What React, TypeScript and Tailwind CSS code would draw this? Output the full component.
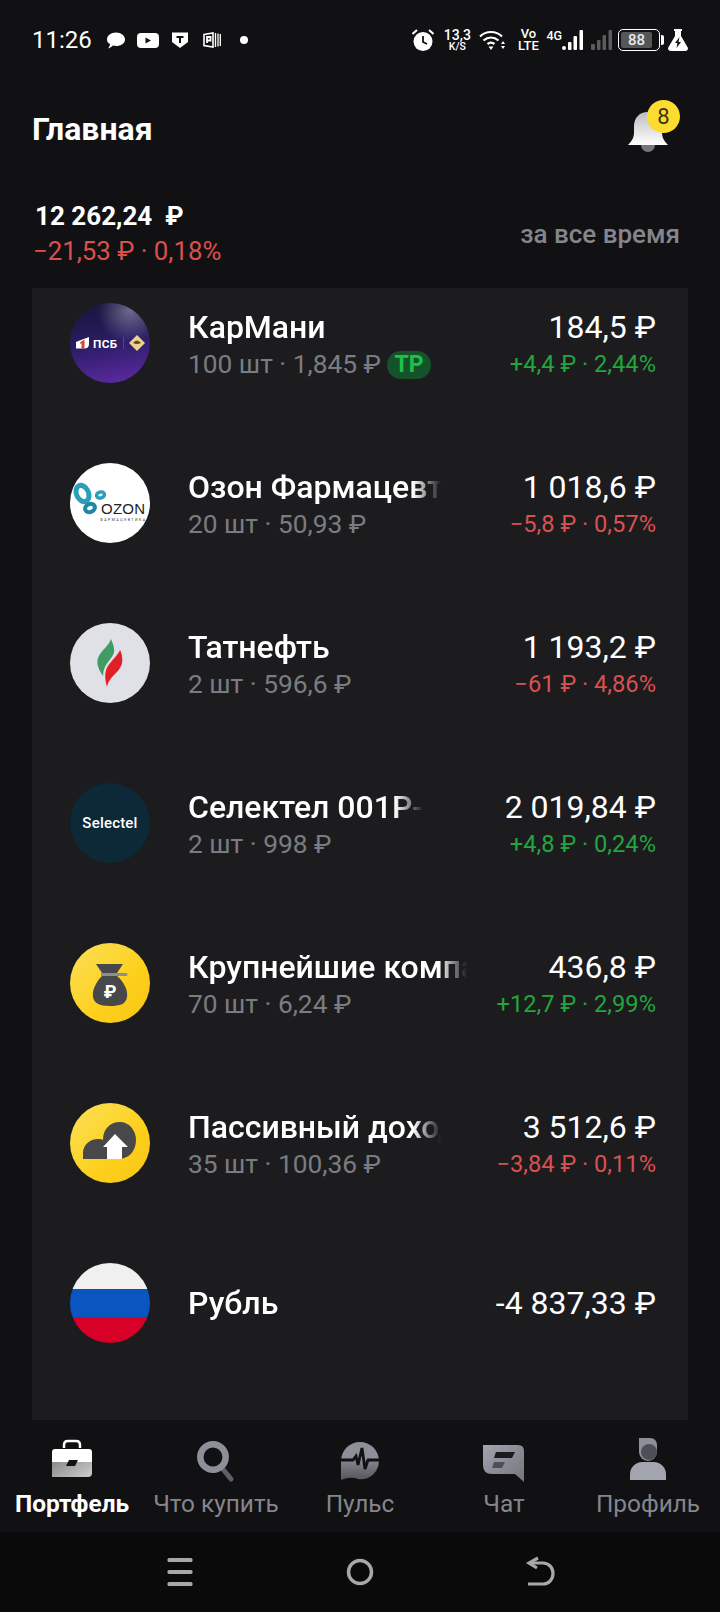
import React from 'react'

const GREEN = 'text-[#22a53c]'
const RED = 'text-[#d9504f]'

function Psb() {
    return (
        <div className="w-20 h-20 rounded-full overflow-hidden shrink-0 bg-[linear-gradient(170deg,#1a1844_15%,#2d1c68_50%,#5a2aa0_95%)]">
            <svg viewBox="0 0 80 80" className="w-20 h-20">
                <defs>
                    <radialGradient id="psbGlow" cx="0.75" cy="0.1" r="0.4">
                        <stop offset="0" stopColor="#8f8aa8" stopOpacity="0.7" />
                        <stop offset="1" stopColor="#8f8aa8" stopOpacity="0" />
                    </radialGradient>
                </defs>
                <rect width="80" height="80" fill="url(#psbGlow)" />
                <path d="M7 38.500 L19 34 V41 Q19 45 15 45.500 H6 V39 Z" fill="#fff" />
                <path d="M10 39.500 L14.500 36.500 V45.500 H11.500 V40 L10 41 Z" fill="#d9432f" />
                <text x="23" y="44.700" fontSize="11.700" fontWeight="700" fill="#fff" fontFamily="Roboto, sans-serif" textLength="24">ПСБ</text>
                <rect x="53" y="34" width="0.600" height="12" fill="#6d5c9a" />
                <path d="M67 32 L75 40 L67 48 L59 40 Z" fill="#ecd18f" />
                <path d="M63 40 Q67 35 71 40 Q67 42 63 40 Z" fill="#5a4a1c" />
            </svg>
        </div>
    )
}

function Ozon() {
    return (
        <div className="w-20 h-20 rounded-full overflow-hidden shrink-0 bg-white">
            <svg viewBox="0 0 80 80" className="w-20 h-20">
                <ellipse cx="12.500" cy="30.500" rx="6" ry="8.500" transform="rotate(-25 12.500 30.500)" fill="none" stroke="#2a9fb9" strokeWidth="5" />
                <ellipse cx="30.500" cy="32" rx="4" ry="3" transform="rotate(-15 30.500 32)" fill="none" stroke="#2a9fb9" strokeWidth="3.500" />
                <ellipse cx="20" cy="45" rx="5" ry="4" transform="rotate(-25 20 45)" fill="none" stroke="#1f86a6" strokeWidth="4" />
                <text x="31" y="51" fontSize="15" fill="#222" fontFamily="Liberation Sans, sans-serif" textLength="44">OZON</text>
                <text x="30" y="58" fontSize="3.600" fill="#444" fontFamily="Roboto, sans-serif" textLength="45">ФАРМАЦЕВТИКА</text>
            </svg>
        </div>
    )
}

function Tatneft() {
    return (
        <div className="w-20 h-20 rounded-full overflow-hidden shrink-0 bg-[#dfe1e6]">
            <svg viewBox="0 0 80 80" className="w-20 h-20">
                <path d="M41 16 C39 23 31 27 28 35 C26 41 29 47 33 53 C33 47 35 43 38 39 C42 34 45 30 44 26 C44 22 42 19 41 16 Z" fill="#3f9c63" />
                <path d="M50 27 C48 32 42 37 38 43 C34 49 35 57 37 64 C38 58 42 54 47 49 C52 44 53 38 52 34 C52 31 51 29 50 27 Z" fill="#e01f26" />
            </svg>
        </div>
    )
}

function Selectel() {
    return (
        <div className="w-20 h-20 rounded-full shrink-0 bg-[#0d2836] flex items-center justify-center">
            <span className="text-white text-[15px] font-medium tracking-[0.2px]">Selectel</span>
        </div>
    )
}

function Bag() {
    return (
        <div className="w-20 h-20 rounded-full overflow-hidden shrink-0 bg-[linear-gradient(135deg,#fbe05a,#fdd01c_60%,#f7c514)]">
            <svg viewBox="0 0 80 80" className="w-20 h-20">
                <path d="M26 21 H53 L47 30 H32 Z" fill="#48484a" />
                <path d="M31 30 H57 Q58 32 57 33 H31 Z" fill="#8e8e8e" />
                <path d="M32 33 H47 C54 39 58 47 57 54 C56 61 50 63 40 63 C29 63 24 60 23 54 C22 47 26 39 32 33 Z" fill="#48484a" />
                <text x="40" y="55" fontSize="18" fontWeight="700" fill="#fff" textAnchor="middle" fontFamily="Roboto, sans-serif">₽</text>
            </svg>
        </div>
    )
}

function Cloud() {
    return (
        <div className="w-20 h-20 rounded-full overflow-hidden shrink-0 bg-[linear-gradient(135deg,#fbe05a,#fdd01c_60%,#f7c514)]">
            <svg viewBox="0 0 80 80" className="w-20 h-20">
                <path d="M13 56 V50 C13 42 20 36 28 36 C30 36 32 36 33 37 C33 26 40 19 50 19 C59 19 66 27 66 37 C66 48 59 56 48 56 Z" fill="#48484a" />
                <path d="M45 31 L58 44 H52 V56 H37 V44 H33 Z" fill="#fff" />
            </svg>
        </div>
    )
}

function Flag() {
    return (
        <div className="w-20 h-20 rounded-full overflow-hidden shrink-0 flex flex-col">
            <div className="h-[26px] bg-[#f0f0f0]" />
            <div className="h-[28px] bg-[#0a55c0]" />
            <div className="h-[26px] bg-[#d80027]" />
        </div>
    )
}

const ROWS = [
    { logo: <Psb />, name: 'КарМани', sub: '100 шт · 1,845 ₽', tag: true, value: '184,5 ₽', change: '+4,4 ₽ · 2,44%', color: GREEN },
    { logo: <Ozon />, name: 'Озон Фармацевтика', sub: '20 шт · 50,93 ₽', value: '1 018,6 ₽', change: '−5,8 ₽ · 0,57%', color: RED },
    { logo: <Tatneft />, name: 'Татнефть', sub: '2 шт · 596,6 ₽', value: '1 193,2 ₽', change: '−61 ₽ · 4,86%', color: RED },
    { logo: <Selectel />, name: 'Селектел 001Р-03', sub: '2 шт · 998 ₽', value: '2 019,84 ₽', change: '+4,8 ₽ · 0,24%', color: GREEN },
    { logo: <Bag />, name: 'Крупнейшие компании', sub: '70 шт · 6,24 ₽', value: '436,8 ₽', change: '+12,7 ₽ · 2,99%', color: GREEN },
    { logo: <Cloud />, name: 'Пассивный доход', sub: '35 шт · 100,36 ₽', value: '3 512,6 ₽', change: '−3,84 ₽ · 0,11%', color: RED },
    { logo: <Flag />, name: 'Рубль', value: '-4 837,33 ₽' },
]

function StatusBar() {
    return (
        <div className="h-[80px] flex items-center justify-between pl-[32px] pr-[32px] text-white shrink-0">
            <div className="flex items-center">
                <span className="text-[24px] leading-none w-[75px]">11:26</span>
                <svg width="18" height="17" viewBox="0 0 18 17" fill="#fff">
                    <path d="M9 0.500 C14 0.500 18 3.500 18 7.500 C18 11.500 14 14 9 14 C8 14 7 14 6 13.600 C4.500 15 3 16 1 16.500 C2 15 3 13.500 3 12 C1 11 0 9.500 0 7.500 C0 3.500 4 0.500 9 0.500 Z" />
                </svg>
                <svg width="22" height="15" viewBox="0 0 22 15" className="ml-3">
                    <rect width="22" height="15" rx="4" fill="#fff" />
                    <path d="M8.500 4.500 L14 7.500 L8.500 10.500 Z" fill="#111113" />
                </svg>
                <svg width="16" height="16" viewBox="0 0 16 16" className="ml-[13px]">
                    <path d="M0 0.500 H16 V10 L8 16 L0 10 Z" fill="#fff" />
                    <path d="M4.500 4 H11.500 V6 H9 V11 H7 V6 H4.500 Z" fill="#111113" />
                </svg>
                <svg width="18" height="16" viewBox="0 0 18 16" className="ml-[15px]" fill="none" stroke="#fff">
                    <path d="M1 2.500 L10 1 V15 L1 13.500 Z" strokeWidth="1.600" />
                    <path d="M4 11 V5 H7.500 V8.500 H4" strokeWidth="1.800" />
                    <path d="M12.500 1 V15 M15 1.500 V14.500 M17.300 2 V14" strokeWidth="1.300" />
                </svg>
                <div className="w-2 h-2 rounded-full bg-white ml-[19px]" />
            </div>
            <div className="flex items-center h-[24px]">
                <svg width="22" height="22" viewBox="0 0 22 22" fill="#fff">
                    <circle cx="11" cy="12.500" r="9.500" />
                    <path d="M11 7 V13 L15 15" fill="none" stroke="#111113" strokeWidth="1.800" />
                    <path d="M0.500 5 L5 1 M21.500 5 L17 1" stroke="#fff" strokeWidth="2" />
                </svg>
                <div className="w-[30px] ml-[8px] flex flex-col items-center font-medium">
                    <span className="text-[14px] leading-[13px]">13,3</span>
                    <span className="text-[10.500px] leading-[10px]">K/S</span>
                </div>
                <svg width="27" height="21" viewBox="0 0 27 21" className="ml-[7px]" fill="none" stroke="#fff">
                    <path d="M1 6.500 C7 0.500 17 0.500 23 6.500" strokeWidth="2.200" />
                    <path d="M4.500 10.500 C9 6.500 15 6.500 19.500 10.500" strokeWidth="2.200" />
                    <path d="M8.500 14 C10.500 12.500 13.500 12.500 15.500 14" strokeWidth="2.200" />
                    <path d="M9.500 16.500 H14.500 L12 20 Z" fill="#fff" stroke="none" />
                    <path d="M24 11 L26 14 H22 Z M22 16 H26 L24 19 Z" fill="#fff" stroke="none" />
                </svg>
                <div className="w-[22px] ml-[11px] flex flex-col items-center font-medium text-[13px] leading-[12px]">
                    <span>Vo</span>
                    <span>LTE</span>
                </div>
                <span className="text-[12.500px] font-medium leading-none ml-[7px] -mt-[8px]">4G</span>
                <svg width="21" height="20" viewBox="0 0 21 20" fill="#fff">
                    <circle cx="2" cy="18" r="2" />
                    <rect x="6" y="12" width="3.500" height="8" rx="1" />
                    <rect x="11.500" y="6" width="3.500" height="14" rx="1" />
                    <rect x="17.500" y="0" width="3.500" height="20" rx="1" />
                </svg>
                <svg width="21" height="20" viewBox="0 0 21 20" fill="#5c5c5c" className="ml-[8px]">
                    <rect x="0" y="14" width="4" height="6" rx="1" />
                    <rect x="6" y="10" width="3.500" height="10" rx="1" />
                    <rect x="11.500" y="5" width="3.500" height="15" rx="1" />
                    <rect x="17.500" y="0" width="3.500" height="20" rx="1" />
                </svg>
                <div className="ml-[6px] w-[42px] h-[22px] rounded-[5px] border-[1.500px] border-white p-[2px] relative">
                    <div className="w-[31px] h-full rounded-[2px] bg-[#55565a]" />
                    <span className="absolute inset-0 flex items-center justify-center text-[15px] font-medium pr-[5px] text-[#e8e8e8]">88</span>
                </div>
                <div className="w-[3px] h-[10px] bg-white rounded-r-[2px] ml-[1px]" />
                <svg width="20" height="22" viewBox="0 0 20 22" className="ml-[4px]" fill="#fff">
                    <path d="M6 0 H14 V2 H13 V7 L20 19 Q20 22 17 22 H3 Q0 22 0 19 L7 7 V2 H6 Z" />
                    <path d="M11.500 8 L7 14 H9.500 L8.500 19 L13 13 H10.500 Z" fill="#111113" />
                </svg>
            </div>
        </div>
    )
}

function Row({ row }: { row: (typeof ROWS)[number] }) {
    return (
        <div className="h-20 flex items-center">
            {row.logo}
            <div className={`flex-1 min-w-0 ml-[38px] flex flex-col ${row.sub ? 'mt-[6px]' : ''}`}>
                <div className="flex items-center justify-between h-[38px]">
                    <div className="flex-1 min-w-0 mr-[82px] overflow-hidden whitespace-nowrap text-[32px] font-medium leading-[38px] text-white [mask-image:linear-gradient(to_left,transparent,black_28px)]">
                        {row.name}
                    </div>
                    <div className="shrink-0 text-[32px] leading-[38px] text-white">{row.value}</div>
                </div>
                {row.sub && (
                    <div className="flex items-center justify-between h-[38px] whitespace-nowrap">
                        <div className="flex items-center text-[26.300px] text-[#7b7c81]">
                            {row.sub}
                            {row.tag && (
                                <span className="ml-[6px] w-[44px] h-[28px] rounded-full bg-[#14532a] flex items-center justify-center text-[#1fc04a] text-[23px] font-bold">
                                    ТР
                                </span>
                            )}
                        </div>
                        <div className={`text-[23.700px] ${row.color}`}>{row.change}</div>
                    </div>
                )}
            </div>
        </div>
    )
}

function NavIcon({ index }: { index: number }) {
    if (index === 0) {
        return (
            <svg width="44" height="46" viewBox="0 0 44 46">
                <defs>
                    <linearGradient id="caseLow" x1="0" y1="0" x2="1" y2="0.600">
                        <stop offset="0" stopColor="#8a8a8a" />
                        <stop offset="1" stopColor="#c4c4c4" />
                    </linearGradient>
                </defs>
                <path d="M14 10 V7 Q14 3 18 3 H26 Q30 3 30 7 V10" fill="none" stroke="#fff" strokeWidth="2.500" />
                <path d="M5 11 H39 Q42 11 42 14 V24 H2 V14 Q2 11 5 11 Z" fill="#fff" />
                <path d="M2 24 H42 V35 Q42 39 38 39 H2 Z" fill="url(#caseLow)" />
                <path d="M19 22 H28 L25 28 H16 Z" fill="#111113" />
            </svg>
        )
    }
    if (index === 1) {
        return (
            <svg width="44" height="46" viewBox="0 0 44 46" fill="none">
                <path d="M28 30 L37 41" stroke="#5f6066" strokeWidth="5" strokeLinecap="round" />
                <circle cx="19" cy="19" r="12.700" stroke="#8d8f99" strokeWidth="6.500" />
            </svg>
        )
    }
    if (index === 2) {
        return (
            <svg width="44" height="46" viewBox="0 0 44 46">
                <defs>
                    <linearGradient id="pulseLow" x1="0" y1="0" x2="0" y2="1">
                        <stop offset="0" stopColor="#85868e" />
                        <stop offset="1" stopColor="#55565a" />
                    </linearGradient>
                </defs>
                <path d="M3 23 A19 19 0 0 1 41 23 Z" fill="#8d8f99" />
                <path d="M3 22 H41 A19 19 0 0 1 30 40 Q24 42 20 41 Q12 38 3 42 Z" fill="url(#pulseLow)" />
                <path d="M3 22 H15 L18 18 L20 27 L24 10 L27 31 L30 22 H41" fill="none" stroke="#111113" strokeWidth="2.800" />
            </svg>
        )
    }
    if (index === 3) {
        return (
            <svg width="44" height="46" viewBox="0 0 44 46">
                <defs>
                    <linearGradient id="chatFill" x1="0" y1="0" x2="1" y2="1">
                        <stop offset="0" stopColor="#a2a4ae" />
                        <stop offset="1" stopColor="#73757c" />
                    </linearGradient>
                </defs>
                <path d="M1 7 H36 Q42 7 42 13 V44 L33 36 H10 Q1 36 1 27 Z" fill="url(#chatFill)" />
                <path d="M14 14 H33 L30 20 H12 Z" fill="#1a1b1f" />
                <path d="M12 24 H23 L20 30 H10 Z" fill="#4e4f55" />
            </svg>
        )
    }
    return (
        <svg width="44" height="46" viewBox="0 0 44 46">
            <path d="M13 0 H24 Q31 0 31 8 V14 A9 9 0 0 1 13 14 Z" fill="#8d8f99" />
            <circle cx="23" cy="14" r="8" fill="#4e4f54" />
            <path d="M4 42 V36 C4 29 10 24 16 24 H28 C34 24 40 29 40 36 V42 Z" fill="#a3a5ae" />
        </svg>
    )
}

const TABS = ['Портфель', 'Что купить', 'Пульс', 'Чат', 'Профиль']

export default function App() {
    return (
        <div className="w-[720px] h-[1612px] flex flex-col bg-[#111113] overflow-hidden font-['Roboto',sans-serif]">
            <StatusBar />

            <div className="h-[100px] flex items-center justify-between pl-[32px] pr-[32px] shrink-0">
                <h1 className="text-[32px] font-bold text-white -mt-[2px]">Главная</h1>
                <div className="relative w-[40px] h-[40px] mr-[20px] mt-[4px]">
                    <svg width="40" height="40" viewBox="0 0 40 40">
                        <defs>
                            <linearGradient id="bellFill" x1="0" y1="0" x2="0" y2="1">
                                <stop offset="0" stopColor="#bdbdbd" />
                                <stop offset="1" stopColor="#ffffff" />
                            </linearGradient>
                        </defs>
                        <circle cx="20" cy="33" r="7" fill="#77777a" />
                        <path d="M20 0 C11 0 6 6 6 15 V21 C6 26 3 30 0 33 H40 C37 30 34 26 34 21 V15 C34 6 29 0 20 0 Z" fill="url(#bellFill)" />
                    </svg>
                    <div className="absolute -top-[12px] left-[19px] w-[33px] h-[33px] rounded-full bg-[#fcdc30] flex items-center justify-center text-[22px] text-[#3c3411]">
                        8
                    </div>
                </div>
            </div>

            <div className="h-[108px] flex items-center justify-between pl-[33px] pr-[40px] shrink-0">
                <div className="flex flex-col">
                    <div className="pl-[2px] text-[26px] font-bold leading-[34px] text-white whitespace-pre">12 262,24  ₽</div>
                    <div className={`text-[25.800px] leading-[37px] ${RED}`}>−21,53 ₽ · 0,18%</div>
                </div>
                <div className="text-[26px] font-medium text-[#85868c]">за все время</div>
            </div>

            <div className="flex-1 min-h-0 mx-[32px] pt-[15px] pl-[38px] pr-[32px] bg-[#1c1c1f] flex flex-col gap-[80px]">
                {ROWS.map((row) => (
                    <Row key={row.name} row={row} />
                ))}
            </div>

            <div className="h-[112px] grid grid-cols-5 shrink-0 pt-[18px]">
                {TABS.map((tab, i) => (
                    <div key={tab} className="flex flex-col items-center">
                        <NavIcon index={i} />
                        <span className={`mt-[6px] text-[24.400px] leading-[28px] whitespace-nowrap ${i === 0 ? 'font-bold text-white' : 'text-[#85868c]'}`}>
                            {tab}
                        </span>
                    </div>
                ))}
            </div>

            <div className="h-[80px] shrink-0 bg-[#0a0a0b] flex items-center justify-center gap-[150px]">
                <svg width="30" height="32" viewBox="0 0 30 32" fill="#a8a8a8">
                    <rect x="2.500" y="2" width="25" height="4" rx="1.500" />
                    <rect x="2.500" y="14" width="25" height="4" rx="1.500" />
                    <rect x="2.500" y="26" width="25" height="4" rx="1.500" />
                </svg>
                <svg width="30" height="32" viewBox="0 0 30 32" fill="none">
                    <circle cx="15" cy="16" r="11.500" stroke="#a8a8a8" strokeWidth="3.500" />
                </svg>
                <svg width="30" height="32" viewBox="0 0 30 32" fill="none" stroke="#a8a8a8" strokeWidth="3.200">
                    <path d="M3 28 H18 C24 28 28 23 28 17.500 C28 12 24 7 18 7 H4" />
                    <path d="M13 2 L4 7 L12 12" />
                </svg>
            </div>
        </div>
    )
}
